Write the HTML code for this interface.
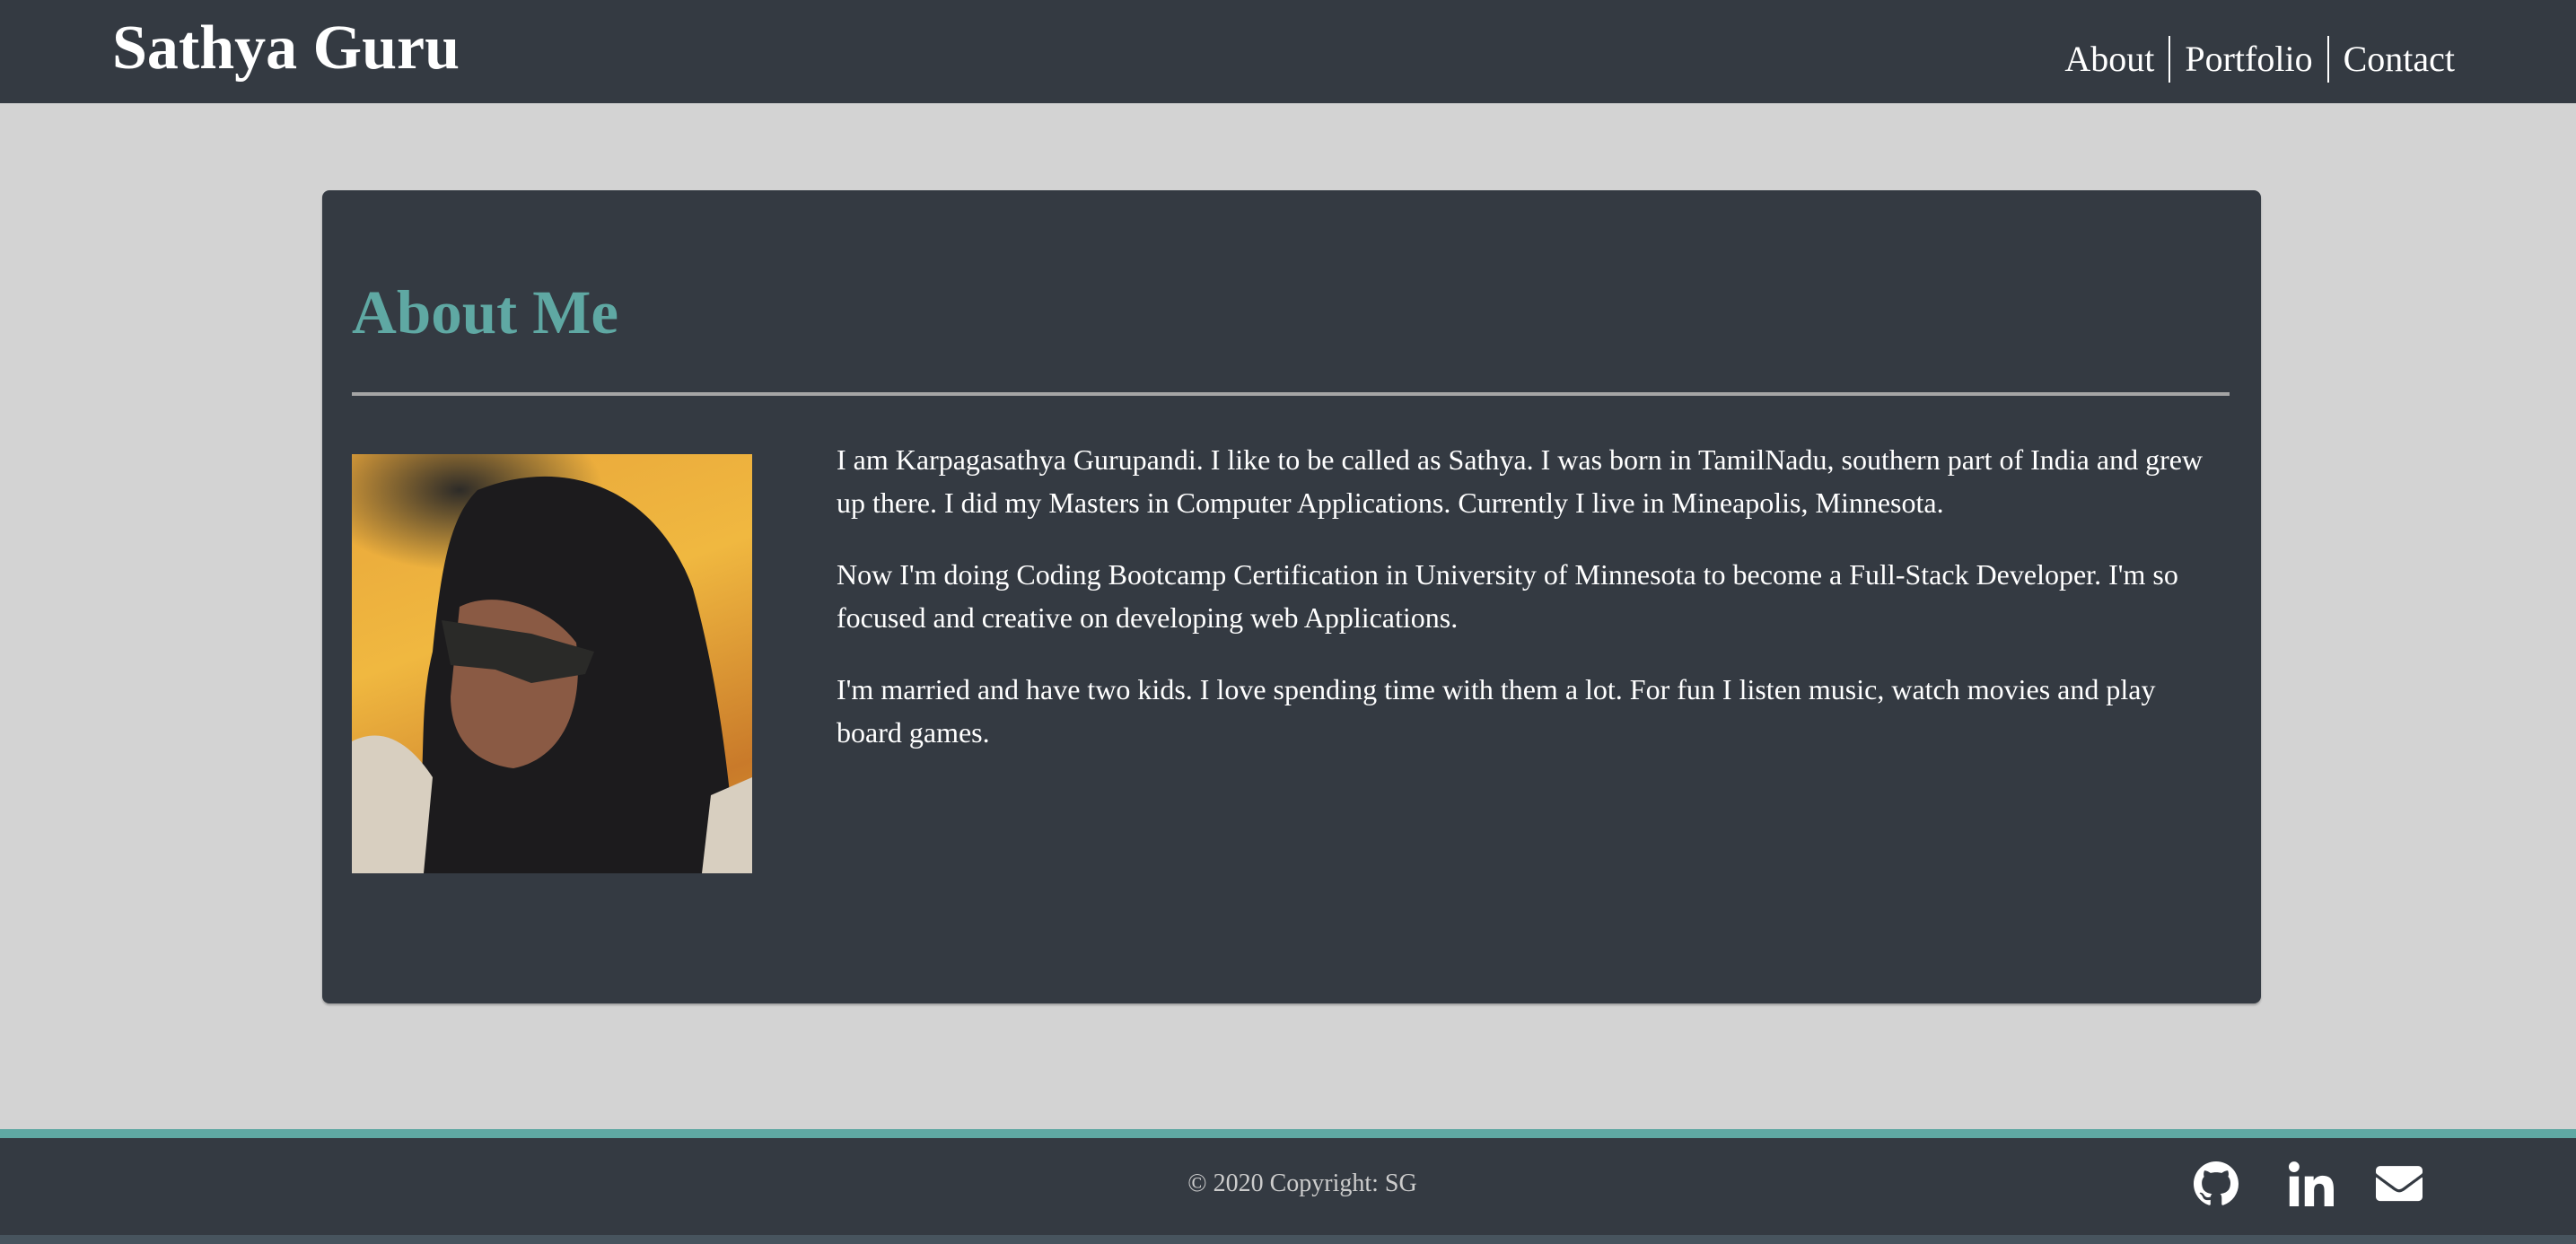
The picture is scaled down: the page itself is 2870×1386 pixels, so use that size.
<!DOCTYPE html>
<html><head><meta charset="utf-8"><style>
*{margin:0;padding:0;box-sizing:border-box}
html,body{width:2870px;height:1386px;overflow:hidden;background:#d3d3d3;font-family:"Liberation Serif",serif}
.hdr{position:absolute;left:0;top:0;width:2870px;height:115px;background:#343a42}
.title{position:absolute;left:125px;top:14px;font-size:70px;font-weight:bold;color:#fff;line-height:80px}
.nav{position:absolute;top:40px;right:135px;height:52px;display:flex;align-items:center;color:#fff;font-size:40px}
.nav span{padding:0 16px;line-height:52px}
.nav span+span{border-left:2px solid #fff}
.nav span:last-child{padding-right:0}
.card{position:absolute;left:359px;top:212px;width:2160px;height:906px;background:#343a42;border-radius:8px;box-shadow:0 2px 2px rgba(0,0,0,.25)}
h1{position:absolute;left:33px;top:96px;font-size:69px;color:#5fa8a3;font-weight:bold;line-height:80px}
.hr{position:absolute;left:33px;top:225px;width:2092px;height:4px;background:#a5a5a5}
.photo{position:absolute;left:33px;top:294px;width:446px;height:467px;overflow:hidden;
background:radial-gradient(ellipse 160px 90px at 120px 40px,#2d2b28,transparent),linear-gradient(160deg,#e8a53a,#f0b840 40%,#c97a2a 80%,#d8962e)}
.txt{position:absolute;left:573px;top:276px;width:1535px;color:#fff;font-size:32px;line-height:48px}
.txt p{margin-bottom:32px}
.teal{position:absolute;left:0;top:1258px;width:2870px;height:10px;background:#5fa8a3}
.ftr{position:absolute;left:0;top:1268px;width:2870px;height:108px;background:#343a42}
.strip{position:absolute;left:0;top:1376px;width:2870px;height:10px;background:#47545e}
.copy{position:absolute;left:16px;width:2870px;top:1302px;text-align:center;color:#ccc;font-size:28px;line-height:34px}
.ic{position:absolute;top:1294px;width:50px;height:50px}
</style></head><body>
<div class="hdr"><div class="title">Sathya Guru</div>
<div class="nav"><span>About</span><span>Portfolio</span><span>Contact</span></div></div>
<div class="card">
<h1>About Me</h1>
<div class="hr"></div>
<div class="photo"><svg width="446" height="467" viewBox="0 0 446 467">
<path d="M140 40 C240 0 340 40 380 150 C410 260 420 360 430 467 L60 467 C90 380 70 300 90 220 C100 120 110 70 140 40Z" fill="#1c1b1d"/>
<path d="M120 170 C160 150 220 170 250 210 C260 290 230 340 180 350 C140 345 110 320 110 270 Z" fill="#8a5a44"/>
<path d="M100 185 L200 200 L270 220 L260 245 L200 255 L160 240 L110 235 Z" fill="#2a2a28"/>
<path d="M0 320 C40 300 70 330 90 360 L80 467 L0 467Z" fill="#d8cfc0"/>
<path d="M400 380 L446 360 L446 467 L390 467Z" fill="#d8cfc0"/>
</svg></div>
<div class="txt">
<p>I am Karpagasathya Gurupandi. I like to be called as Sathya. I was born in TamilNadu, southern part of India and grew up there. I did my Masters in Computer Applications. Currently I live in Mineapolis, Minnesota.</p>
<p>Now I'm doing Coding Bootcamp Certification in University of Minnesota to become a Full-Stack Developer. I'm so focused and creative on developing web Applications.</p>
<p>I'm married and have two kids. I love spending time with them a lot. For fun I listen music, watch movies and play board games.</p>
</div>
</div>
<div class="teal"></div><div class="ftr"></div><div class="strip"></div>
<div class="copy">© 2020 Copyright: SG</div>
<svg class="ic" style="left:2444px" viewBox="0 0 16 16"><path fill="#fff" d="M8 0C3.580 0 0 3.58 0 8c0 3.54 2.29 6.530 5.47 7.590.4.07.55-.17.55-.38 0-.19-.01-.82-.01-1.49-2.01.37-2.53-.49-2.69-.94-.09-.23-.48-.94-.82-1.13-.28-.15-.68-.52-.01-.53.63-.01 1.08.58 1.23.82.72 1.21 1.87.87 2.33.66.07-.52.28-.87.51-1.07-1.78-.2-3.64-.89-3.64-3.950 0-.87.31-1.590.82-2.150-.08-.2-.36-1.02.08-2.12 0 0 .67-.21 2.2.82.64-.18 1.32-.27 2-.27.68 0 1.36.09 2 .27 1.53-1.04 2.2-.82 2.2-.82.44 1.1.16 1.92.08 2.12.51.56.82 1.27.82 2.15 0 3.07-1.87 3.75-3.65 3.95.29.25.54.73.54 1.48 0 1.07-.01 1.93-.01 2.2 0 .21.15.46.55.38A8.013 8.013 0 0016 8c0-4.42-3.58-8-8-8z"/></svg>
<svg class="ic" style="left:2550px" viewBox="0 0 448 448"><path fill="#fff" d="M100 448H7V149h93zM53 108C23 108 0 84 0 54a53 53 0 01106 0c0 30-24 54-53 54zm395 340h-93V302c0-35-1-79-48-79-48 0-55 37-55 77v148h-93V149h89v41h1c13-24 43-48 88-48 94 0 111 62 111 142v164z"/></svg>
<svg class="ic" style="left:2647px;width:52px" viewBox="0 0 512 400"><path fill="#fff" d="M502 131c4-3 10 0 10 5v204c0 27-21 48-48 48H48c-27 0-48-21-48-48V136c0-5 6-8 10-5 22 17 52 39 154 114 21 15 57 48 92 47 36 0 72-32 92-47 102-75 132-97 154-114zM256 260c23 1 57-29 73-40 133-96 143-105 174-129 6-5 9-12 9-19V52c0-27-21-48-48-48H48C21 4 0 25 0 52v20c0 7 3 14 9 19 31 24 41 33 174 129 16 11 50 41 73 40z"/></svg>
</body></html>
